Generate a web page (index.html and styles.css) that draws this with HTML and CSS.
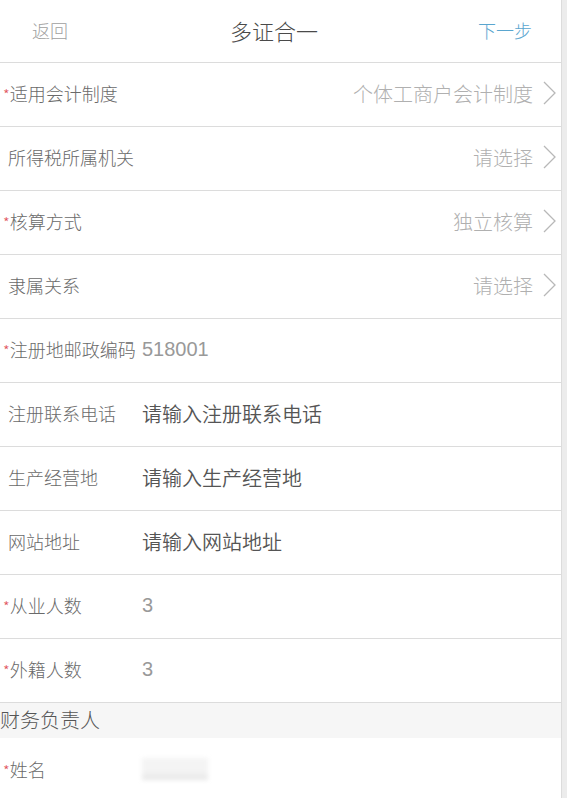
FILE: index.html
```html
<!DOCTYPE html>
<html lang="zh-CN">
<head>
	<meta charset="UTF-8">
	<meta name="viewport" content="width=device-width, initial-scale=1.0, user-scalable=no"/>
	<title>多证合一</title>
	<link rel="stylesheet" href="styles.css">
</head>
<body>
	<div class="page">
		<!-- 顶部导航 -->
		<div class="header">
			<span class="back">返回</span>
			<span class="title">多证合一</span>
			<span class="next">下一步</span>
		</div>

		<div class="form">
			<div class="row">
				<span class="label"><i class="star">*</i>适用会计制度</span>
				<span class="pick">个体工商户会计制度</span>
				<svg class="arrow" viewBox="0 0 13 24"><polyline points="1,1 12,12 1,23"/></svg>
			</div>
			<div class="row">
				<span class="label">所得税所属机关</span>
				<span class="pick">请选择</span>
				<svg class="arrow" viewBox="0 0 13 24"><polyline points="1,1 12,12 1,23"/></svg>
			</div>
			<div class="row">
				<span class="label"><i class="star">*</i>核算方式</span>
				<span class="pick">独立核算</span>
				<svg class="arrow" viewBox="0 0 13 24"><polyline points="1,1 12,12 1,23"/></svg>
			</div>
			<div class="row">
				<span class="label">隶属关系</span>
				<span class="pick">请选择</span>
				<svg class="arrow" viewBox="0 0 13 24"><polyline points="1,1 12,12 1,23"/></svg>
			</div>
			<div class="row">
				<span class="label"><i class="star">*</i>注册地邮政编码</span>
				<span class="value num">518001</span>
			</div>
			<div class="row">
				<span class="label">注册联系电话</span>
				<span class="value">请输入注册联系电话</span>
			</div>
			<div class="row">
				<span class="label">生产经营地</span>
				<span class="value">请输入生产经营地</span>
			</div>
			<div class="row">
				<span class="label">网站地址</span>
				<span class="value">请输入网站地址</span>
			</div>
			<div class="row">
				<span class="label"><i class="star">*</i>从业人数</span>
				<span class="value num">3</span>
			</div>
			<div class="row">
				<span class="label"><i class="star">*</i>外籍人数</span>
				<span class="value num">3</span>
			</div>
		</div>

		<!-- 财务负责人 -->
		<div class="section">财务负责人</div>
		<div class="form">
			<div class="row last">
				<span class="label"><i class="star">*</i>姓名</span>
				<span class="value"><span class="blur"></span></span>
			</div>
		</div>
	</div>
</body>
</html>
```

FILE: styles.css
```css
* {
	margin: 0;
	padding: 0;
	box-sizing: border-box;
}
body {
	font-family: "Noto Sans CJK SC", "Liberation Sans", sans-serif;
	font-weight: 300;
	background-color: #ececec;
	overflow: hidden;
}
.page {
	width: 562px;
	height: 798px;
	background-color: white;
	border-right: 1px solid #dcdcdc;
}
.header {
	display: flex;
	align-items: center;
	justify-content: space-between;
	height: 63px;
	padding: 0 29px 3px 32px;
	border-bottom: 1px solid #dcdcdc;
}
.back {
	font-size: 18px;
	color: #a0a0a0;
}
.title {
	font-size: 22px;
	color: #4a4a4a;
	margin-left: 2px;
}
.next {
	font-size: 18px;
	color: #5aa6cf;
}
.row {
	display: flex;
	align-items: center;
	height: 64px;
	padding: 0 4px 3px 8px;
	border-bottom: 1px solid #dcdcdc;
}
.row.last {
	border-bottom: none;
}
.label {
	width: 134px;
	flex-shrink: 0;
	font-size: 18px;
	color: #6a6a6a;
	white-space: nowrap;
}
.star {
	font-style: normal;
	color: #e0505a;
	font-size: 15px;
	margin-left: -5px;
}
.pick {
	flex: 1;
	text-align: right;
	font-size: 20px;
	color: #b0b0b0;
}
.arrow {
	width: 13px;
	height: 24px;
	margin-left: 10px;
	margin-right: 1px;
}
.arrow polyline {
	fill: none;
	stroke: #b8b8b8;
	stroke-width: 1.3;
}
.value {
	font-size: 20px;
	color: #555;
	font-weight: 350;
}
.value.num {
	font-family: "Liberation Sans", sans-serif;
	font-weight: 400;
	color: #999;
}
.section {
	height: 35px;
	line-height: 33px;
	background-color: #f6f6f6;
	font-size: 20px;
	color: #555;
}
.blur {
	display: inline-block;
	width: 66px;
	height: 22px;
	margin-top: 6px;
	background: linear-gradient(to bottom, #f4f4f4 60%, #e6e6e6 100%);
	filter: blur(2px);
}
```
